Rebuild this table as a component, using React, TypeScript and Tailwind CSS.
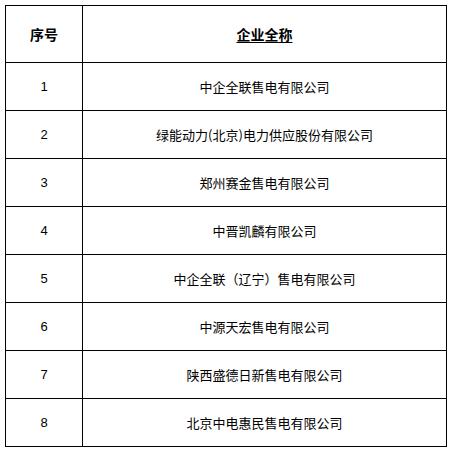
import React from 'react';

const companies = [
  '中企全联售电有限公司',
  '绿能动力(北京)电力供应股份有限公司',
  '郑州赛金售电有限公司',
  '中晋凯麟有限公司',
  '中企全联（辽宁）售电有限公司',
  '中源天宏售电有限公司',
  '陕西盛德日新售电有限公司',
  '北京中电惠民售电有限公司',
];

export default function App() {
  return (
    <div className="w-[451px] h-[453px] bg-white pt-[5px] pl-[5px]">
      <table
        className="border-collapse w-[442px] text-black"
        style={{ fontFamily: '"Noto Sans CJK SC", "Liberation Sans", sans-serif' }}
      >
        <thead>
          <tr className="h-[57px]">
            <th className="w-[77px] border border-black text-[14px] font-bold">序号</th>
            <th className="border border-black text-[14px] font-bold">
              <span className="underline underline-offset-2">企业全称</span>
            </th>
          </tr>
        </thead>
        <tbody>
          {companies.map((name, i) => (
            <tr key={i} className="h-[48px]">
              <td className="border border-black text-center text-[13px] font-['Liberation_Sans',sans-serif]">
                {i + 1}
              </td>
              <td className="border border-black text-center text-[13px]">{name}</td>
            </tr>
          ))}
        </tbody>
      </table>
    </div>
  );
}
